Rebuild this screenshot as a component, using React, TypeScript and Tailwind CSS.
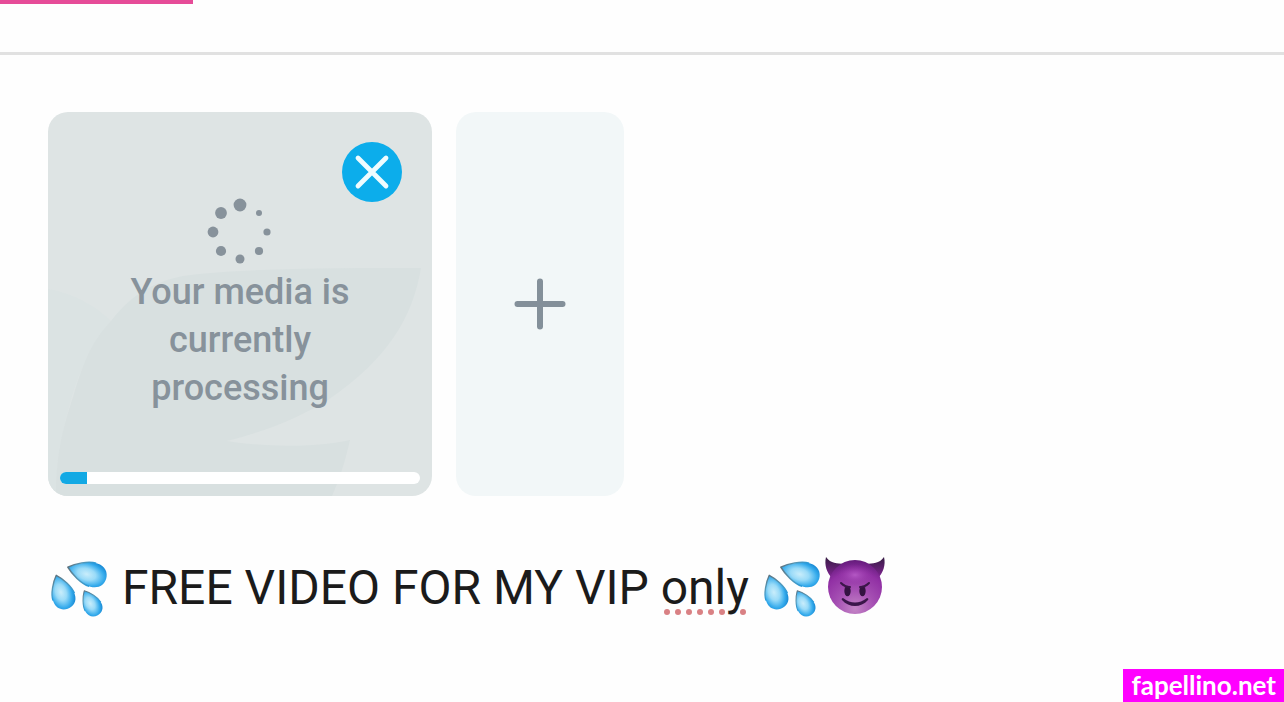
import { useState } from "react";

const SPINNER_DOTS = [
  { x: 36, y: 9, r: 6.4 },
  { x: 17, y: 17, r: 5.9 },
  { x: 9, y: 36, r: 5.4 },
  { x: 17, y: 55, r: 5.1 },
  { x: 36, y: 63, r: 4.5 },
  { x: 55, y: 55, r: 4.1 },
  { x: 63, y: 36, r: 3.6 },
  { x: 55, y: 17, r: 3 },
];

const SPELLING_DOTS = [6, 17, 28, 39, 50, 61, 82];

function Spinner() {
  return (
    <svg viewBox="0 0 72 72" className="size-18 fill-[#87929b]" aria-hidden="true">
      {SPINNER_DOTS.map((dot) => (
        <circle key={`${dot.x}-${dot.y}`} cx={dot.x} cy={dot.y} r={dot.r} />
      ))}
    </svg>
  );
}

function LeafBackdrop() {
  return (
    <svg
      viewBox="0 0 384 384"
      className="absolute inset-0 size-full"
      preserveAspectRatio="none"
      aria-hidden="true"
    >
      <path d="M0 177C24 181 47 193 63 209C38 240 14 285 8 384H0Z" fill="#dbe3e3" />
      <path
        d="M373 156C290 156 194 156 135 164C100 171 80 187 63 209C42 231 34 255 25 285C14 318 8 345 8 384H284C292 366 297 350 302 328C260 337 208 334 179 329C225 317 252 305 280 288C340 247 365 205 373 156Z"
        fill="#d8e0e0"
      />
    </svg>
  );
}

function DropShape({ transform }: { transform: string }) {
  return (
    <g transform={transform}>
      <path
        d="M0 -17C5 -12 11 -2 11 6C11 13 6 17 0 17C-6 17 -11 13 -11 6C-11 -2 -5 -12 0 -17Z"
        fill="url(#drop-fill)"
      />
      <path
        d="M-11 5C-11 -2 -5 -12 0 -17C5 -12 11 -2 11 5"
        fill="none"
        stroke="url(#drop-edge)"
        strokeWidth="1.3"
        strokeLinejoin="round"
      />
    </g>
  );
}

function SweatDrops() {
  return (
    <svg viewBox="0 0 62 62" className="size-[62px] shrink-0" role="img" aria-label="sweat droplets">
      <defs>
        <radialGradient id="drop-fill" cx="0.45" cy="0.5" r="0.58">
          <stop offset="0" stopColor="#c9edfb" />
          <stop offset="0.4" stopColor="#9adbf8" />
          <stop offset="0.78" stopColor="#35abec" />
          <stop offset="1" stopColor="#1b8cd6" />
        </radialGradient>
        <linearGradient id="drop-edge" x1="0" y1="0" x2="0" y2="1">
          <stop offset="0" stopColor="#5f7480" />
          <stop offset="0.5" stopColor="#5596b4" />
          <stop offset="1" stopColor="#279bdc" />
        </linearGradient>
      </defs>
      <DropShape transform="translate(39 16) rotate(-73) scale(1.1 1.18)" />
      <DropShape transform="translate(14 35) rotate(-19) scale(1.03 1.04)" />
      <DropShape transform="translate(43 46) rotate(-29) scale(0.82 0.82)" />
    </svg>
  );
}

function DevilFace() {
  return (
    <svg viewBox="0 0 60 60" className="h-15 w-16 shrink-0" role="img" aria-label="smiling face with horns">
      <defs>
        <radialGradient id="devil-skin" cx="0.5" cy="0.9" r="0.9">
          <stop offset="0" stopColor="#c485c6" />
          <stop offset="0.4" stopColor="#a54fb3" />
          <stop offset="0.75" stopColor="#9130a4" />
          <stop offset="1" stopColor="#641b7b" />
        </radialGradient>
        <radialGradient id="devil-shine">
          <stop offset="0" stopColor="#b458c4" />
          <stop offset="1" stopColor="#9130a4" stopOpacity="0" />
        </radialGradient>
        <linearGradient id="devil-horn" x1="0" y1="0" x2="0" y2="1">
          <stop offset="0" stopColor="#351c42" />
          <stop offset="1" stopColor="#842397" />
        </linearGradient>
      </defs>
      <path
        d="M1 0C6 7 12 6 19 7L7 21C2 16 -1 8 1 0ZM59 0C54 7 48 6 41 7L53 21C58 16 61 8 59 0Z"
        fill="url(#devil-horn)"
      />
      <circle cx="30" cy="30" r="27" fill="url(#devil-skin)" />
      <ellipse cx="30" cy="18" rx="19" ry="11" fill="url(#devil-shine)" />
      <ellipse cx="22.5" cy="34" rx="3.2" ry="5.2" fill="#331241" />
      <ellipse cx="37.5" cy="34" rx="3.2" ry="5.2" fill="#331241" />
      <path
        d="M16 26C18 28 21 30 25 30M44 26C42 28 39 30 35 30"
        fill="none"
        stroke="#3b164a"
        strokeWidth="2"
        strokeLinecap="round"
      />
      <path
        d="M18 41C26 47 34 47 42 41C43 41 44 42 43 43C36 51 24 51 17 43C16 42 17 41 18 41Z"
        fill="#3b164a"
      />
    </svg>
  );
}

function MisspelledWord({ children }: { children: string }) {
  return (
    <span className="relative">
      <svg
        viewBox="0 0 88 6"
        className="absolute bottom-px left-0 h-[6px] w-22 fill-[#d98184]"
        aria-hidden="true"
      >
        {SPELLING_DOTS.map((x) => (
          <circle key={x} cx={x} cy="3" r="3" />
        ))}
      </svg>
      <span className="relative">{children}</span>
    </span>
  );
}

function MediaCard({ percent, onRemove }: { percent: number; onRemove: () => void }) {
  return (
    <div className="relative flex size-96 flex-col overflow-hidden rounded-[20px] bg-[#dee4e4] p-3">
      <LeafBackdrop />
      <button
        type="button"
        aria-label="Remove media"
        onClick={onRemove}
        className="absolute top-[30px] right-[30px] flex size-15 items-center justify-center rounded-full bg-[#0cadeb]"
      >
        <svg
          viewBox="0 0 60 60"
          className="size-15 stroke-[#effcff]"
          fill="none"
          strokeWidth="4.8"
          strokeLinecap="round"
          aria-hidden="true"
        >
          <path d="M16 16L44 44M44 16L16 44" />
        </svg>
      </button>
      <div className="relative flex flex-1 flex-col items-center pt-[72px]">
        <Spinner />
        <p className="w-60 text-center text-[36px] leading-12 font-medium text-[#87929b]">
          Your media is currently processing
        </p>
      </div>
      <div
        role="progressbar"
        aria-label="Upload progress"
        aria-valuenow={percent}
        aria-valuemin={0}
        aria-valuemax={100}
        className="relative h-3 overflow-hidden rounded-full bg-white"
      >
        <div className="h-full bg-[#13a9e4]" style={{ width: `${percent}%` }} />
      </div>
    </div>
  );
}

export default function App() {
  const [hasMedia, setHasMedia] = useState(true);

  return (
    <div className="flex min-h-screen flex-col bg-[#fefefe] font-['Roboto',sans-serif]">
      <header className="h-[55px] border-b-3 border-[#e1e1e1]">
        <div className="h-1 w-[15%] bg-[#e64c98]" />
      </header>
      <main className="flex-1 px-12 pt-[57px]">
        <div className="flex gap-6">
          {hasMedia && <MediaCard percent={7.5} onRemove={() => setHasMedia(false)} />}
          <button
            type="button"
            aria-label="Add media"
            onClick={() => setHasMedia(true)}
            className="flex h-96 w-42 items-center justify-center rounded-[20px] bg-[#f2f7f8]"
          >
            <svg
              viewBox="0 0 60 60"
              className="size-15 stroke-[#84909a]"
              fill="none"
              strokeWidth="6"
              strokeLinecap="round"
              aria-hidden="true"
            >
              <path d="M30 7.5V52.5M7.5 30H52.5" />
            </svg>
          </button>
        </div>
        <div className="mt-15 flex items-center gap-3 text-[48px] leading-16 text-[#1b1b1b]">
          <SweatDrops />
          <p>
            FREE VIDEO FOR MY VIP <MisspelledWord>only</MisspelledWord>
          </p>
          <div className="flex items-start">
            <SweatDrops />
            <DevilFace />
          </div>
        </div>
      </main>
      <footer className="flex justify-end">
        <a
          href="https://fapellino.net"
          className="bg-[#ff00ff] px-2 font-['Lato',sans-serif] text-[26px] leading-[33px] font-bold text-white"
        >
          fapellino.net
        </a>
      </footer>
    </div>
  );
}
